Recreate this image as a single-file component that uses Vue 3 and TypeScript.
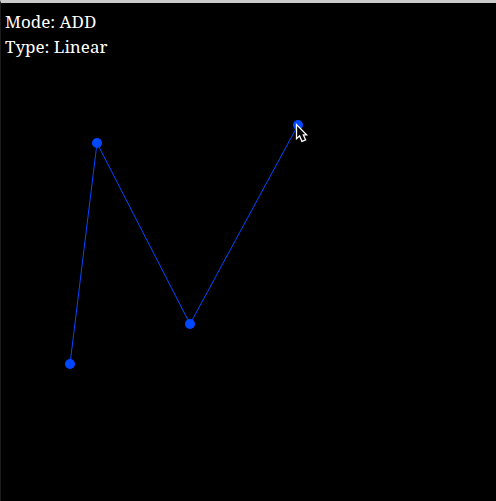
<script setup lang="ts">
interface Point {
  x: number
  y: number
}

const mode = 'ADD'
const curveType = 'Linear'

const points: Point[] = [
  { x: 70, y: 364 },
  { x: 97, y: 143 },
  { x: 190, y: 324 },
  { x: 298, y: 125 },
]

const path = points.map((p) => `${p.x},${p.y}`).join(' ')
</script>

<template>
  <main class="window">
    <svg class="canvas" aria-hidden="true">
      <polyline class="curve" :points="path" />
      <circle v-for="(p, i) in points" :key="i" class="point" :cx="p.x" :cy="p.y" r="5" />
      <path
        class="pointer"
        d="M296.5 124.5 V138.8 L299.6 135.9 L301.9 141.3 L305.6 139.8 L303.3 134.8 H306.6 Z"
      />
    </svg>
    <div class="status">
      <p class="line">Mode: {{ mode }}</p>
      <p class="line">Type: {{ curveType }}</p>
    </div>
  </main>
</template>

<style>
body {
  background: #000;
}
</style>

<style scoped>
.window {
  position: relative;
  box-sizing: border-box;
  min-height: 100vh;
  border-top: 3px solid #cbcbcb;
  border-left: 1px solid #1c1c1c;
  background: #000;
}

.canvas {
  position: absolute;
  top: -3px;
  left: -1px;
  width: 100%;
  height: 100%;
  overflow: visible;
}

.curve {
  fill: none;
  stroke: #0048ff;
  stroke-width: 1;
}

.point {
  fill: #0048ff;
}

.pointer {
  fill: #000;
  stroke: #fff;
  stroke-width: 1.3;
}

.status {
  position: relative;
  padding: 6px 4px;
  color: #fff;
  font-family: "Noto Serif", "Droid Serif", "DejaVu Serif Condensed", "Liberation Serif", serif;
  font-size: 17px;
  line-height: 25px;
}

.line {
  margin: 0;
}
</style>
